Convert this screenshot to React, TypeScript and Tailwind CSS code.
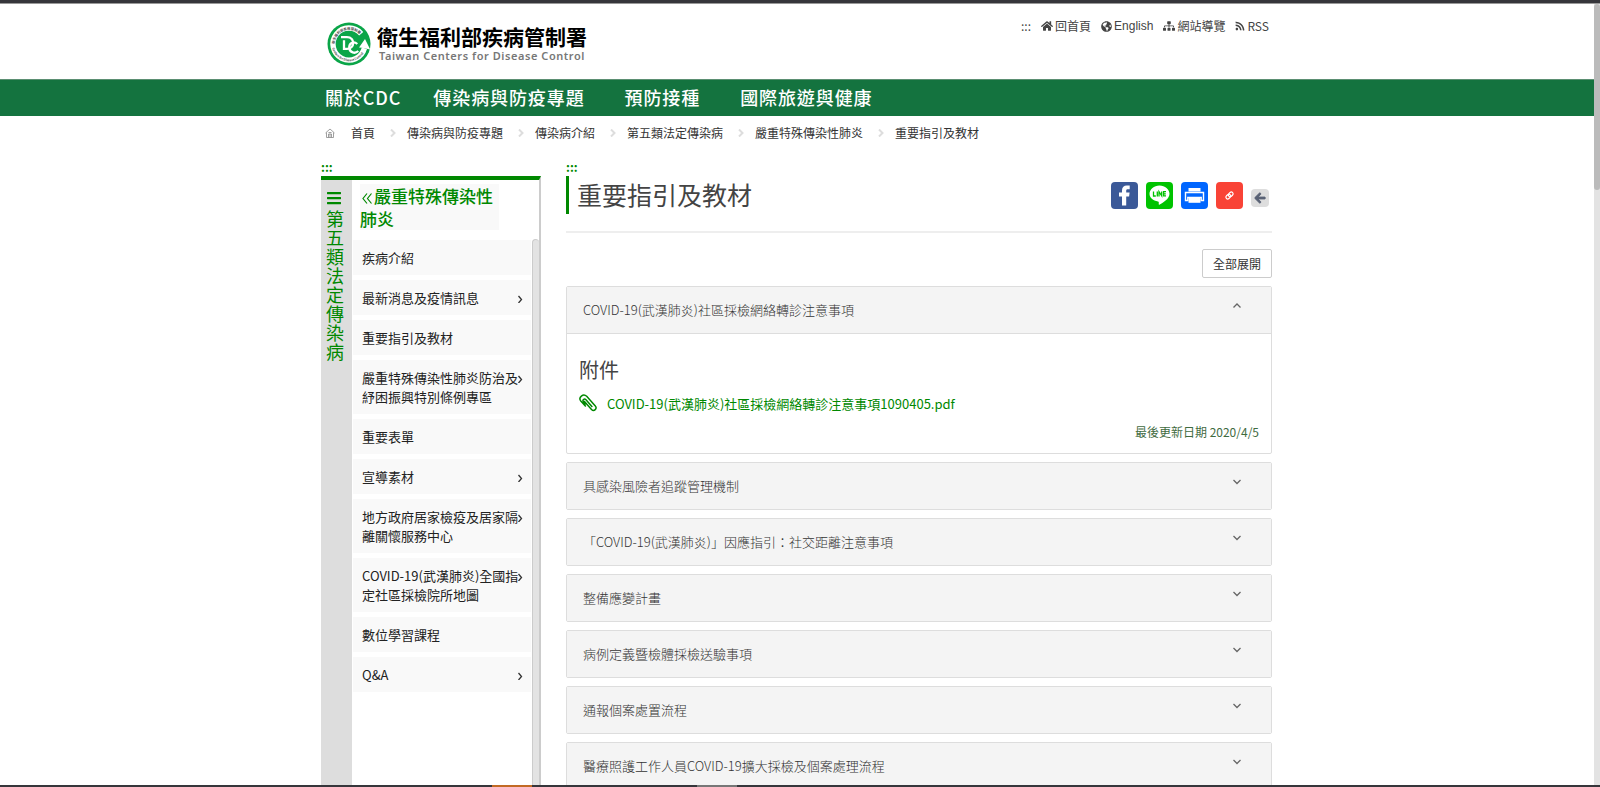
import { ReactNode } from "react";
import { FaArrowLeft, FaBars, FaGlobeAmericas, FaHome, FaRss, FaSitemap } from "react-icons/fa";

const navItems = ["關於CDC", "傳染病與防疫專題", "預防接種", "國際旅遊與健康"];

const crumbs = ["首頁", "傳染病與防疫專題", "傳染病介紹", "第五類法定傳染病", "嚴重特殊傳染性肺炎", "重要指引及教材"];

const menu = [
  { label: "疾病介紹" },
  { label: "最新消息及疫情訊息", sub: true },
  { label: "重要指引及教材" },
  { label: "嚴重特殊傳染性肺炎防治及紓困振興特別條例專區", sub: true },
  { label: "重要表單" },
  { label: "宣導素材", sub: true },
  { label: "地方政府居家檢疫及居家隔離關懷服務中心", sub: true },
  { label: "COVID-19(武漢肺炎)全國指定社區採檢院所地圖", sub: true },
  { label: "數位學習課程" },
  { label: "Q&A", sub: true },
];

const panels = [
  "具感染風險者追蹤管理機制",
  "「COVID-19(武漢肺炎)」因應指引：社交距離注意事項",
  "整備應變計畫",
  "病例定義暨檢體採檢送驗事項",
  "通報個案處置流程",
  "醫療照護工作人員COVID-19擴大採檢及個案處理流程",
];

function Chevron({ d, className = "" }: { d: string; className?: string }) {
  return (
    <svg viewBox="0 0 8 8" className={`shrink-0 ${className}`} fill="none" stroke="currentColor" aria-hidden="true">
      <path d={d} />
    </svg>
  );
}

function Emblem() {
  return (
    <svg viewBox="0 0 44 44" className="size-11 shrink-0" aria-hidden="true">
      <defs>
        <path id="arcTop" d="M7.700 22A14.300 14.300 0 0 1 34 14.300" />
        <path id="arcBottom" d="M5.200 26A17.300 17.300 0 0 0 38.800 26" />
      </defs>
      <circle cx="22" cy="22" r="21.500" fill="#0aa548" />
      {/* ring that ends in an arrow head */}
      <path d="M34.200 11.700A16 16 0 1 0 37.400 26.300" fill="none" stroke="#fff" strokeWidth="5.400" />
      <path d="M32 25.500L38 17l5.200 10.500-3.400-.8-5-1z" fill="#fff" />
      <text fontSize="3.400" fontWeight="700" fill="#444">
        <textPath href="#arcTop">衛生福利部疾病管制署</textPath>
      </text>
      <text fontSize="3" fontWeight="700" fill="#444">
        <textPath href="#arcBottom">Centers for Disease Control</textPath>
      </text>
      <path d="M14 15.200h6c8.500 0 8 11.600 0 11.600h-3v-8.500" fill="none" stroke="#fff" strokeWidth="2.300" />
      <path d="M30.300 22c-4-3.500-8.500-.3-8 4 .6 4.500 5.500 6.300 9 3" fill="none" stroke="#fff" strokeWidth="2.300" />
    </svg>
  );
}

function TopLink({ icon, children, className = "" }: { icon?: ReactNode; children: ReactNode; className?: string }) {
  return (
    <a href="#" className={`flex items-center gap-0.5 ${className}`}>
      {icon}
      {children}
    </a>
  );
}

function Header() {
  return (
    <header className="mx-auto flex h-[75px] w-full max-w-[952px] shrink-0 justify-between">
      <a href="#" className="ml-1.5 flex items-center gap-1.5 pt-1">
        <Emblem />
        <span className="flex flex-col">
          <span className="-mt-1 text-[21px] leading-7 font-bold text-black">衛生福利部疾病管制署</span>
          <span className="pl-0.5 font-['Noto_Sans'] text-[11px] leading-3 font-semibold tracking-wider text-[#777]">
            Taiwan Centers for Disease Control
          </span>
        </span>
      </a>
      <div className="mt-3 mr-1 flex h-5 items-center gap-2.5 text-[12px] text-[#444]">
        <TopLink>:::</TopLink>
        <TopLink icon={<FaHome className="size-3" />}>回首頁</TopLink>
        <TopLink icon={<FaGlobeAmericas className="size-[11px]" />} className="font-['Liberation_Sans']">English</TopLink>
        <TopLink icon={<FaSitemap className="size-3" />}>網站導覽</TopLink>
        <TopLink icon={<FaRss className="size-2.5" />}>RSS</TopLink>
      </div>
    </header>
  );
}

function Breadcrumb() {
  return (
    <nav className="mx-auto flex h-[33px] w-full max-w-[952px] shrink-0 items-center pl-1 text-[12px] text-[#333]">
      <svg viewBox="0 0 10 10" className="mr-4 size-2.5" fill="none" stroke="#888" aria-hidden="true">
        <path d="M.5 5L5 1l4.500 4M1.500 4.500v5h7v-5M3.500 9.500V6h3v3.500M5 6v3.500M3.500 4.500h3" strokeWidth=".8" />
      </svg>
      {crumbs.map((c, i) => (
        <span key={c} className="flex items-center">
          {i > 0 && <Chevron d="M2 0.500L5.500 4 2 7.500" className="mr-2.5 ml-[14px] size-2 stroke-2 text-[#ddd]" />}
          <a href="#">{c}</a>
        </span>
      ))}
    </nav>
  );
}

function Sidebar() {
  return (
    <aside className="flex w-[220px] shrink-0 flex-col">
      <a href="#" className="h-[15px] text-[12px] leading-3 font-bold text-[#080]">:::</a>
      <div className="flex min-h-0 flex-1 border-t-4 border-r-2 border-t-[#080] border-r-[#ccc]">
        <div className="flex w-[31px] shrink-0 flex-col items-start bg-[#ddd] pt-2.5 pl-[5px] text-[#080]">
          <button type="button" aria-label="選單">
            <FaBars className="size-4" />
          </button>
          <span className="mt-[3px] w-[18px] text-[18px] leading-[19px] break-all">第五類法定傳染病</span>
        </div>
        <div className="flex min-w-0 flex-1 flex-col">
          <h2 className="mt-1 ml-2 w-[139px] bg-[#f9f9f9] text-[17px] leading-[23px] font-medium text-[#080]">
            <a href="#">
              <svg viewBox="0 0 14 12" className="inline h-3 w-[14px]" fill="none" stroke="currentColor" aria-hidden="true">
                <path d="M7 1.500L3 6.500l4 5M11.500 1.500l-4 5 4 5" strokeWidth="1.200" />
              </svg>
              嚴重特殊傳染性肺炎
            </a>
          </h2>
          <div className="mt-[9px] flex min-h-0 flex-1">
            <ul className="flex min-w-0 flex-1 flex-col gap-[5px] px-px pt-px">
              {menu.map((m) => (
                <li key={m.label} className="relative bg-[#f9f9f9] py-2 pl-[9px]">
                  <a href="#" className="block w-[162px] text-[13px] leading-[19px] text-[#222]">{m.label}</a>
                  {m.sub && <Chevron d="M2.500 1L5.500 4.500 2.500 8" className="absolute top-[15px] right-[7px] size-2 stroke-[1.3] text-[#333]" />}
                </li>
              ))}
            </ul>
            <div className="w-[7px] shrink-0 rounded-t border-t border-l border-[#ccc] bg-[#e3e3e3]" />
          </div>
        </div>
      </div>
    </aside>
  );
}

function ShareBtn({ label, className, children }: { label: string; className: string; children: ReactNode }) {
  return (
    <button type="button" aria-label={label} className={`flex size-[27px] items-center justify-center rounded ${className}`}>
      {children}
    </button>
  );
}

function Share() {
  return (
    <div className="mt-1.5 mr-[3px] flex items-start gap-2">
      <ShareBtn label="Facebook" className="bg-[#3b5998]">
        <svg viewBox="0 0 27 27" fill="#fff">
          <path d="M11 23.500v-9H8v-4h3V8.300C11 5 13 3.500 15.800 3.500h2.900v3.800h-2c-1.200 0-1.500.6-1.500 1.500v1.700h3.400l-.5 4h-2.900v9z" />
        </svg>
      </ShareBtn>
      <ShareBtn label="LINE" className="bg-[#00c300]">
        <svg viewBox="0 0 27 27" fill="#fff">
          <path d="M13.500 3.500C8 3.500 3.500 7.400 3.500 11.800c0 3.800 3.500 7 8.500 7.700.9.200.9.700.7 2.500 0 .8.400.9 1 .5 3.500-2 9.800-5.500 9.800-10.700C23.500 7.400 19 3.500 13.500 3.500z" />
          <path d="M7.500 9.500v4.500h2.300M11.300 9.500V14.500M13 14.500V9.700l2.700 4.100V9.500M20 9.700h-2.400v4.200H20M17.600 11.800h2.200" fill="none" stroke="#00c300" strokeWidth="1.300" />
        </svg>
      </ShareBtn>
      <ShareBtn label="列印" className="bg-[#0066ff]">
        <svg viewBox="0 0 27 27">
          <path d="M7.500 6h12v3.500h-12z" fill="#fff" />
          <path d="M4.500 10.500h18v8h-2.300v-3H6.800v3H4.500z" fill="none" stroke="#fff" strokeWidth="1.400" />
          <path d="M7.500 16h12v4.800h-12z" fill="#fff" />
        </svg>
      </ShareBtn>
      <ShareBtn label="複製連結" className="bg-[#f94336]">
        <svg viewBox="0 0 27 27" fill="none" stroke="#fff" strokeWidth="1.200">
          <g transform="rotate(-42 13.500 13.500)">
            <rect x="9.300" y="11.700" width="5.200" height="3.600" rx="1.800" />
            <rect x="12.500" y="11.700" width="5.200" height="3.600" rx="1.800" />
          </g>
        </svg>
      </ShareBtn>
      <button type="button" aria-label="回上一頁" className="mt-[7px] flex size-[18px] items-center justify-center rounded bg-[#ddd] text-[#5a6275]">
        <FaArrowLeft className="size-3 stroke-[40] stroke-current" />
      </button>
    </div>
  );
}

function PanelHead({ title, open }: { title: string; open?: boolean }) {
  return (
    <button type="button" aria-expanded={!!open} className="flex h-[46px] w-full items-center justify-between bg-[#f4f4f4] pr-[30px] pl-4 text-left text-[13px] font-light text-[#333]">
      {title}
      <Chevron d={open ? "M0.500 5.500L4 2l3.500 3.500" : "M0.500 2L4 5.500 7.500 2"} className="mb-2 size-2 stroke-[1.3] text-[#666]" />
    </button>
  );
}

function Main() {
  return (
    <main className="mr-px flex min-w-0 flex-1 flex-col">
      <a href="#" className="h-[15px] shrink-0 text-[12px] leading-3 font-bold text-[#080]">:::</a>
      <div className="flex h-[57px] shrink-0 items-start justify-between border-b-2 border-[#eee]">
        <h1 className="h-[38px] border-l-3 border-[#080] pl-2 text-[25px] leading-9 text-[#444]">重要指引及教材</h1>
        <Share />
      </div>
      <div className="mt-4 mb-2 flex shrink-0 justify-end">
        <button type="button" className="h-[29px] rounded-xs border border-[#ccc] px-2.5 text-[12px] text-[#333]">全部展開</button>
      </div>
      <div className="flex flex-col gap-2">
        <section className="overflow-hidden rounded-xs border border-[#ddd]">
          <PanelHead title="COVID-19(武漢肺炎)社區採檢網絡轉診注意事項" open />
          <div className="h-[120px] border-t border-[#ddd] px-3 pt-5">
            <h3 className="text-[20px] leading-8 text-[#444]">附件</h3>
            <a href="#" className="mt-2 flex h-5 items-center gap-2.5 text-[13px] text-[#080]">
              <svg viewBox="0 0 18 18" className="mb-0.5 size-[18px]" fill="none" stroke="currentColor" strokeWidth="1.500">
                <path d="M5 7l7.500 8.500c2.600 2.400 6-.8 3.800-3.600L7.700 2.300C4.200-1-1 3.400 1.800 7l5 5.400M13.300 13L7 5.700C5.200 4.100 3 6 4.500 7.800l2.300 2.600" />
              </svg>
              COVID-19(武漢肺炎)社區採檢網絡轉診注意事項1090405.pdf
            </a>
            <p className="mt-2 text-right text-[12px] leading-5 text-[#3f6b3f]">最後更新日期 2020/4/5</p>
          </div>
        </section>
        {panels.map((p) => (
          <section key={p} className="shrink-0 overflow-hidden rounded-xs border border-[#ddd]">
            <PanelHead title={p} />
          </section>
        ))}
      </div>
    </main>
  );
}

export default function App() {
  return (
    <div className="flex h-screen flex-col overflow-hidden bg-white font-['Noto_Sans_CJK_TC',sans-serif]">
      <div className="h-1 shrink-0 border-b border-[#999] bg-[#36363b]" />
      <div className="flex min-h-0 flex-1">
        <div className="flex min-w-0 flex-1 flex-col">
          <Header />
          <nav className="h-[37px] shrink-0 border-t border-[#5b8f72] bg-[#14733f]">
            <ul className="mx-auto flex max-w-[952px] items-center gap-x-10 pl-1 text-[18px] leading-[34px] font-medium tracking-wider text-white">
              {navItems.map((n) => (
                <li key={n} className="first:-mr-2">
                  <a href="#">{n}</a>
                </li>
              ))}
            </ul>
          </nav>
          <Breadcrumb />
          <div className="mx-auto mt-3 flex min-h-0 w-full max-w-[952px] flex-1 gap-[25px]">
            <Sidebar />
            <Main />
          </div>
        </div>
        <div className="w-1.5 shrink-0 bg-[#e3e3e3]">
          <div className="h-[186px] rounded bg-[#bbb]" />
        </div>
      </div>
      <div className="flex h-0.5 shrink-0 bg-[#36363b]">
        <div className="ml-[492px] w-10 bg-[#c26a24]" />
        <div className="ml-[165px] w-10 bg-[#777]" />
      </div>
    </div>
  );
}
